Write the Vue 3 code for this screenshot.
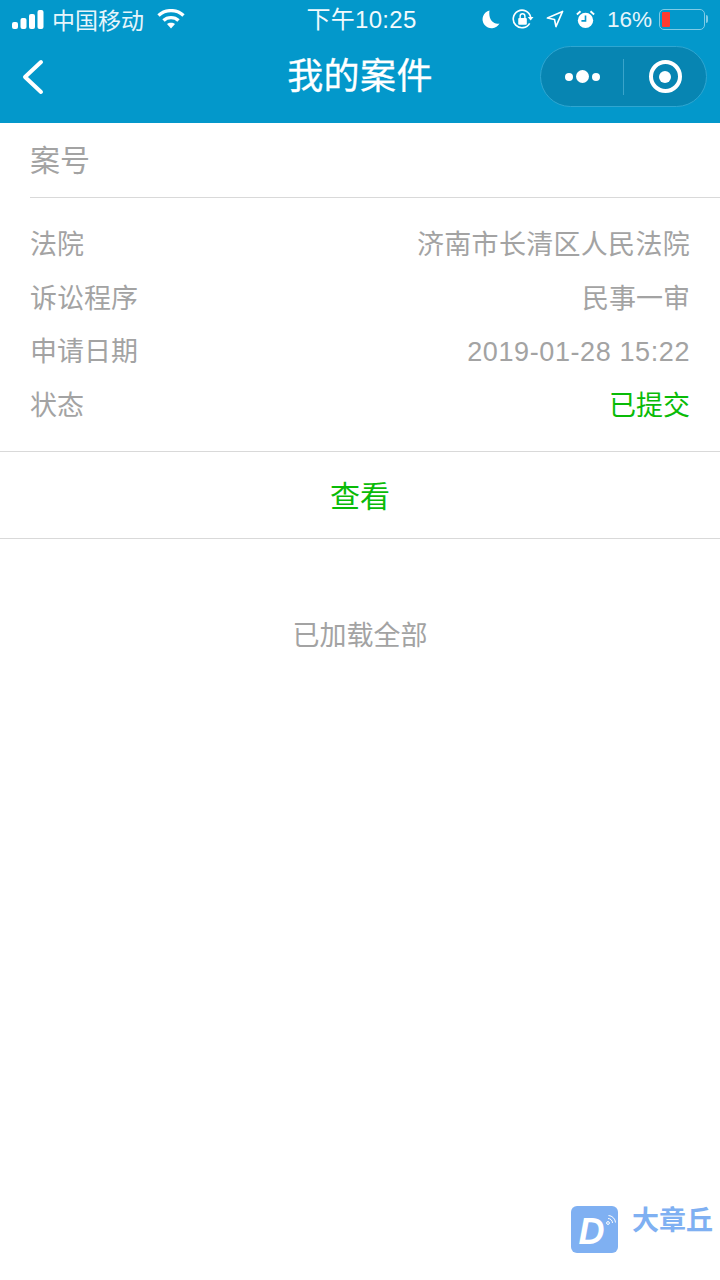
<script setup>
const rows = [
  { label: '法院', value: '济南市长清区人民法院', cls: 'wide' },
  { label: '诉讼程序', value: '民事一审' },
  { label: '申请日期', value: '2019-01-28 15:22', cls: 'spaced' },
  { label: '状态', value: '已提交', cls: 'green' }
]
</script>

<template>
  <div class="page">
    <header class="head">
      <div class="status">
        <div class="status-left">
          <svg class="signal" width="32" height="19" viewBox="0 0 32 19">
            <rect x="0" y="12" width="6" height="7" rx="2" fill="#fff" />
            <rect x="8.5" y="8" width="6" height="11" rx="2" fill="#fff" />
            <rect x="17" y="4" width="6" height="15" rx="2" fill="#fff" />
            <rect x="25.5" y="0" width="6" height="19" rx="2" fill="#fff" />
          </svg>
          <span class="carrier">中国移动</span>
          <svg class="wifi" width="28" height="20" viewBox="0 0 28 20">
            <path d="M1.5 6.5C8.5 0 19.5 0 26.5 6.5" fill="none" stroke="#fff" stroke-width="3.4" />
            <path d="M6.5 11.5C10.5 7.6 17.5 7.6 21.5 11.5" fill="none" stroke="#fff" stroke-width="3.4" />
            <path d="M10 15C12 13.2 16 13.2 18 15L14 19.5Z" fill="#fff" />
          </svg>
        </div>
        <span class="clock">下午10:25</span>
        <div class="status-right">
          <svg width="18" height="19" viewBox="0 0 18 19">
            <path d="M7.5 0.5A9 9 0 1 0 17.5 13.5C12 15 6 10 7.5 0.5Z" fill="#fff" />
          </svg>
          <svg width="22" height="21" viewBox="0 0 23 22">
            <path d="M18.5 15A9.2 9.2 0 1 1 19.5 8.5" fill="none" stroke="#fff" stroke-width="1.7" />
            <path d="M16.5 8.5H22.5L19.5 12Z" fill="#fff" />
            <rect x="6.5" y="9.5" width="9" height="7" rx="1" fill="#fff" />
            <path d="M8.5 9.5V7.5A2.5 2.5 0 0 1 13.5 7.5V9.5" fill="none" stroke="#fff" stroke-width="1.5" />
          </svg>
          <svg width="18" height="18" viewBox="0 0 19 19">
            <path d="M1.5 8.5L17.5 1.5L10.5 17.5L9 10Z" fill="none" stroke="#fff" stroke-width="1.7" stroke-linejoin="round" />
          </svg>
          <svg width="19" height="19" viewBox="0 0 21 21">
            <circle cx="10.5" cy="11.5" r="8.5" fill="#fff" />
            <path d="M10.5 6V12H6" fill="none" stroke="#0398cd" stroke-width="1.8" />
            <path d="M1 5L5 1.5M20 5L16 1.5" stroke="#fff" stroke-width="2.2" />
          </svg>
          <span class="percent">16%</span>
          <div class="battery">
            <div class="battery-body"><div class="battery-fill"></div></div>
            <div class="battery-tip"></div>
          </div>
        </div>
      </div>
      <div class="nav">
        <svg class="back" width="24" height="36" viewBox="0 0 24 36">
          <path d="M21 3L5 18L21 33" fill="none" stroke="#fff" stroke-width="4" stroke-linecap="round" stroke-linejoin="round" />
        </svg>
        <h1 class="title">我的案件</h1>
        <div class="capsule">
          <div class="capsule-part dots">
            <i class="dot"></i><i class="dot big"></i><i class="dot"></i>
          </div>
          <div class="capsule-line"></div>
          <div class="capsule-part">
            <div class="target"><i></i></div>
          </div>
        </div>
      </div>
    </header>

    <main>
      <div class="case-no">案号</div>
      <div class="info">
        <div v-for="row in rows" :key="row.label" class="row">
          <span>{{ row.label }}</span>
          <span :class="row.cls">{{ row.value }}</span>
        </div>
      </div>
      <div class="view">查看</div>
      <div class="loaded">已加载全部</div>
    </main>

    <div class="mark">
      <div class="mark-logo">
        <span class="mark-d">D</span>
        <svg class="mark-wave" width="12" height="12" viewBox="0 0 12 12">
          <circle cx="3" cy="9" r="1.4" fill="none" stroke="#fff" stroke-width="1" />
          <path d="M3 4.5A4.5 4.5 0 0 1 7.5 9M3.5 1.5A7.5 7.5 0 0 1 10.5 8.5" fill="none" stroke="#fff" stroke-width="1" />
        </svg>
      </div>
      <span class="mark-name">大章丘</span>
    </div>
  </div>
</template>

<style scoped>
.page {
  position: relative;
  width: 720px;
  height: 1280px;
  overflow: hidden;
  background: #fff;
  font-family: "Liberation Sans", "Noto Sans CJK SC", sans-serif;
  color: #a3a3a3;
}

.head {
  height: 123px;
  background: #0398cb;
  color: #fff;
}

.status {
  position: relative;
  display: flex;
  justify-content: space-between;
  align-items: center;
  height: 38px;
  padding: 0 12px;
}

.status-left {
  display: flex;
  align-items: center;
}

.carrier {
  margin-left: 8px;
  font-size: 23px;
  color: #e6f5fb;
}

.wifi {
  margin-left: 13px;
}

.clock {
  position: absolute;
  left: 3px;
  right: 0;
  top: 1px;
  text-align: center;
  font-size: 24px;
  line-height: 38px;
  letter-spacing: .3px;
  color: #f2fafd;
}

.status-right {
  display: flex;
  align-items: center;
  gap: 12px;
}

.percent {
  margin-top: 2px;
  font-size: 22.5px;
  color: #e6f5fb;
}

.battery {
  display: flex;
  align-items: center;
  margin-left: -5px;
}

.battery-body {
  width: 46px;
  height: 21px;
  padding: 2px;
  box-sizing: border-box;
  border: 1.5px solid #7fcbe6;
  border-radius: 5px;
}

.battery-fill {
  width: 8px;
  height: 100%;
  background: #ff3b30;
  border-radius: 1px;
}

.battery-tip {
  width: 2px;
  height: 8px;
  margin-left: 1px;
  background: #7fcbe6;
  border-radius: 0 2px 2px 0;
}

.nav {
  position: relative;
  display: flex;
  justify-content: space-between;
  align-items: center;
  height: 85px;
  padding: 0 13px 8px 20px;
  box-sizing: border-box;
}

.title {
  position: absolute;
  left: 0;
  right: 0;
  top: 14px;
  margin: 0;
  text-align: center;
  font-size: 36px;
  line-height: 50px;
  font-weight: 400;
  letter-spacing: .4px;
  -webkit-text-stroke: .3px #fff;
}

.capsule {
  position: relative;
  display: flex;
  align-items: center;
  width: 167px;
  height: 61px;
  box-sizing: border-box;
  border: 1px solid #2fa6d1;
  border-radius: 31px;
  background: #0785b2;
}

.capsule-part {
  flex: 1;
  display: flex;
  justify-content: center;
  align-items: center;
}

.dots {
  gap: 3px;
}

.dot {
  width: 8px;
  height: 8px;
  border-radius: 50%;
  background: #fff;
}

.dot.big {
  width: 13px;
  height: 13px;
}

.capsule-line {
  width: 1px;
  height: 36px;
  background: #3aa4ca;
}

.target {
  display: flex;
  justify-content: center;
  align-items: center;
  width: 33px;
  height: 33px;
  box-sizing: border-box;
  border: 4px solid #fff;
  border-radius: 50%;
}

.target i {
  width: 12px;
  height: 12px;
  border-radius: 50%;
  background: #fff;
}

.case-no {
  height: 74px;
  margin-left: 30px;
  border-bottom: 1px solid #d9d9d9;
  font-size: 30px;
  line-height: 76px;
}

.info {
  padding: 21px 30px 18px;
  border-bottom: 1px solid #d9d9d9;
}

.row {
  display: flex;
  justify-content: space-between;
  height: 53.6px;
  font-size: 27px;
  line-height: 53.6px;
}

.wide {
  letter-spacing: .3px;
}

.spaced {
  letter-spacing: .6px;
}

.green {
  color: #09bb07;
}

.view {
  height: 86px;
  border-bottom: 1px solid #d9d9d9;
  text-align: center;
  font-size: 30px;
  line-height: 89px;
  color: #09bb07;
}

.loaded {
  margin-top: 78px;
  text-align: center;
  font-size: 27px;
  line-height: 38px;
}

.mark {
  position: absolute;
  left: 571px;
  top: 1206px;
  display: flex;
  align-items: flex-start;
}

.mark-logo {
  position: relative;
  width: 47px;
  height: 47px;
  border-radius: 6px;
  background: #7fb0f2;
  text-align: center;
}

.mark-d {
  position: relative;
  top: 3px;
  left: -3px;
  font-size: 36px;
  line-height: 46px;
  font-weight: 700;
  font-style: italic;
  font-family: "Liberation Sans", sans-serif;
  color: #fff;
}

.mark-wave {
  position: absolute;
  right: 1px;
  top: 8px;
}

.mark-name {
  margin-left: 14px;
  font-size: 27px;
  line-height: 30px;
  font-weight: 700;
  color: #7fb0f2;
}
</style>
